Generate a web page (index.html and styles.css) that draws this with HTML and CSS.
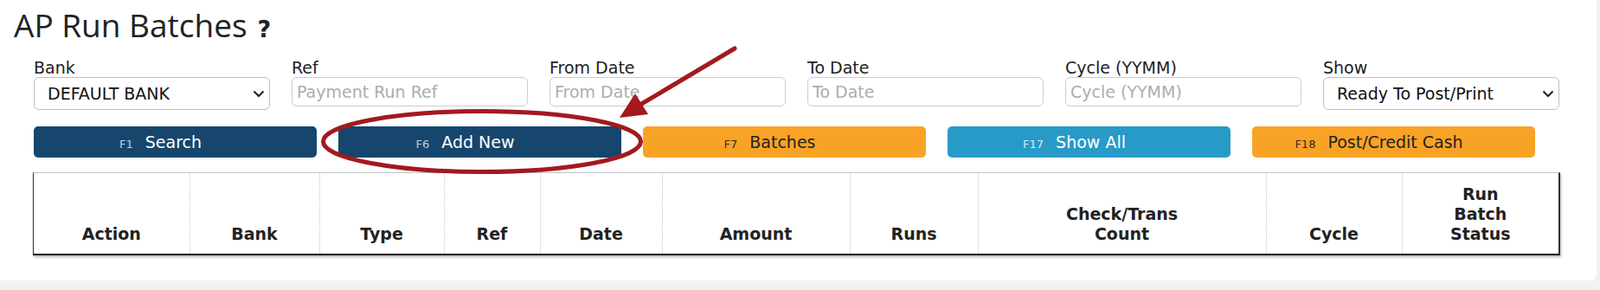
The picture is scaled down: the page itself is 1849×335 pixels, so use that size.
FILE: index.html
```html
<!DOCTYPE html>
<html lang="en">
  <head>
    <meta charset="UTF-8" />
    <meta name="viewport" content="width=device-width, initial-scale=1.0" />
    <title>AP Run Batches</title>
    <link rel="stylesheet" href="styles.css">
  </head>
  <body>
    <div class="panel">
      <h1 class="title">AP Run Batches<span class="help">?</span></h1>

      <div class="filters">
        <div class="field">
          <label for="bank">Bank</label>
          <div class="select-wrap">
            <select id="bank"><option>DEFAULT BANK</option></select>
            <svg class="chevron" viewBox="0 0 14 9"><polyline points="1.5,1.5 7,7 12.5,1.5" /></svg>
          </div>
        </div>
        <div class="field">
          <label for="ref">Ref</label>
          <input id="ref" type="text" placeholder="Payment Run Ref" />
        </div>
        <div class="field">
          <label for="fromdate">From Date</label>
          <input id="fromdate" type="text" placeholder="From Date" />
        </div>
        <div class="field">
          <label for="todate">To Date</label>
          <input id="todate" type="text" placeholder="To Date" />
        </div>
        <div class="field">
          <label for="cycle">Cycle (YYMM)</label>
          <input id="cycle" type="text" placeholder="Cycle (YYMM)" />
        </div>
        <div class="field">
          <label for="show">Show</label>
          <div class="select-wrap">
            <select id="show"><option>Ready To Post/Print</option><option>Posted</option><option>All</option></select>
            <svg class="chevron" viewBox="0 0 14 9"><polyline points="1.5,1.5 7,7 12.5,1.5" /></svg>
          </div>
        </div>
      </div>

      <div class="actions">
        <button class="btn navy"><span class="key">F1</span>Search</button>
        <button class="btn navy"><span class="key">F6</span>Add New</button>
        <button class="btn orange"><span class="key">F7</span>Batches</button>
        <button class="btn blue"><span class="key">F17</span>Show All</button>
        <button class="btn orange"><span class="key">F18</span>Post/Credit Cash</button>
      </div>

      <div class="grid-wrap">
        <table class="grid">
          <colgroup>
            <col style="width: 180px" />
            <col style="width: 150px" />
            <col style="width: 144px" />
            <col style="width: 111px" />
            <col style="width: 141px" />
            <col style="width: 217px" />
            <col style="width: 148px" />
            <col style="width: 333px" />
            <col style="width: 157px" />
            <col style="width: 181px" />
          </colgroup>
          <thead>
            <tr>
              <th>Action</th>
              <th>Bank</th>
              <th>Type</th>
              <th>Ref</th>
              <th>Date</th>
              <th>Amount</th>
              <th>Runs</th>
              <th>Check/Trans<br />Count</th>
              <th>Cycle</th>
              <th>Run<br />Batch<br />Status</th>
            </tr>
          </thead>
        </table>
      </div>
    </div>

    <!-- red markup drawn over the screenshot -->
    <svg class="markup" width="1849" height="335" viewBox="0 0 1849 335">
      <ellipse cx="557" cy="163.5" rx="183.5" ry="35" />
      <line x1="849" y1="56" x2="738" y2="122" />
      <polygon points="716,136 734,108 749,132" />
    </svg>
  </body>
</html>
```

FILE: styles.css
```css
body {
  margin: 0;
  background: #f1f2f3;
  font-family: "DejaVu Sans", Verdana, sans-serif;
  color: #222;
}

.panel {
  box-sizing: border-box;
  width: 1845px;
  height: 324px;
  padding: 4px 0 0 16px;
  background: #fff;
  border-radius: 0 0 7px 0;
}

.title {
  height: 50px;
  margin: 0;
  font-family: "Open Sans", sans-serif;
  font-size: 37px;
  font-weight: 400;
  line-height: 50px;
  color: #222;
}

.help {
  margin-left: 12px;
  font-family: "DejaVu Sans", sans-serif;
  font-size: 27px;
  font-weight: bold;
  line-height: 1;
}

/* filter row */
.filters {
  display: grid;
  grid-template-columns: repeat(6, 273px);
  column-gap: 25px;
  align-items: start;
  margin: 13px 0 0 23px;
}

.field label {
  display: block;
  font-size: 19px;
  line-height: 22px;
  color: #222;
}

.select-wrap {
  position: relative;
  height: 38px;
}

.select-wrap select {
  appearance: none;
  -webkit-appearance: none;
  box-sizing: border-box;
  width: 100%;
  height: 38px;
  padding: 0 30px 0 15px;
  border: 1px solid #c2bdb8;
  border-radius: 6px;
  background: #fff;
  font-family: "DejaVu Sans", sans-serif;
  font-size: 19px;
  color: #111;
}

.chevron {
  position: absolute;
  right: 6px;
  top: 15px;
  width: 14px;
  height: 9px;
  fill: none;
  stroke: #222;
  stroke-width: 2;
  pointer-events: none;
}

.field input {
  display: block;
  box-sizing: border-box;
  width: 100%;
  height: 34px;
  padding: 0 5px;
  border: 1px solid #cccccc;
  border-radius: 6px;
  font-family: "DejaVu Sans", sans-serif;
  font-size: 19px;
  color: #222;
}

.field input::placeholder {
  color: #adadad;
}

/* action buttons */
.actions {
  display: grid;
  grid-template-columns: repeat(5, 327px);
  column-gap: 25px;
  margin: 19px 0 0 23px;
}

.btn {
  height: 36px;
  padding: 0 34px 0 0;
  border: 0;
  border-radius: 5px;
  font-family: "DejaVu Sans", sans-serif;
  font-size: 19px;
  text-align: center;
  color: #fff;
}

.btn .key {
  margin-right: 14px;
  font-size: 13px;
}

.navy {
  background: #16466d;
}

.navy .key {
  color: #c2d0dd;
}

.orange {
  background: #f8a326;
  color: #222;
}

.orange .key {
  color: #3a2a22;
}

.blue {
  background: #289ac8;
}

.blue .key {
  color: #d6e9f2;
}

/* results grid */
.grid-wrap {
  box-sizing: border-box;
  width: 1765px;
  margin: 17px 0 0 22px;
  border-top: 1px solid #c4c4c4;
  border-left: 1px solid #333;
  border-right: 2px solid #333;
  border-bottom: 2px solid #222;
  box-shadow: 1px 2px 3px rgba(0, 0, 0, 0.3);
}

.grid {
  width: 100%;
  border-collapse: collapse;
  table-layout: fixed;
}

.grid th {
  padding: 13px 2px 11px;
  border-left: 1px dotted #c6c6c6;
  font-size: 19px;
  font-weight: bold;
  line-height: 23px;
  text-align: center;
  vertical-align: bottom;
  color: #222;
}

.grid th:first-child {
  border-left: none;
}

/* annotation */
.markup {
  position: absolute;
  top: 0;
  left: 0;
  pointer-events: none;
}

.markup ellipse,
.markup line {
  fill: none;
  stroke: #a3191e;
  stroke-width: 5;
  stroke-linecap: round;
}

.markup polygon {
  fill: #a3191e;
}
```
